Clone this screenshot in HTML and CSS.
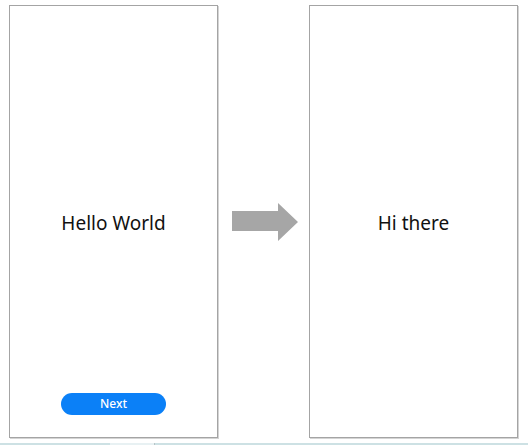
FILE: index.html
```html
<!DOCTYPE html>
<html>
<head>
<meta charset="utf-8">
<link rel="stylesheet" href="styles.css">
</head>
<body>
<div class="stage">
  <div class="frame">
    <div class="title">Hello World</div>
    <div class="foot"><button class="next">Next</button></div>
  </div>
  <svg class="arrow" width="66" height="38" viewBox="0 0 66 38">
    <polygon points="0,8 46,8 46,0 66,19 46,38 46,28 0,28" fill="#a6a6a6"/>
  </svg>
  <div class="frame">
    <div class="title">Hi there</div>
    <div class="foot"></div>
  </div>
</div>
<div class="strip">
  <div class="seg a"></div>
  <div class="seg b"></div>
  <div class="seg c"></div>
  <div class="seg d"></div>
</div>
</body>
</html>
```
FILE: styles.css
```css
html, body {
  margin: 0;
  padding: 0;
  background: #ffffff;
}
body {
  width: 528px;
  height: 445px;
  overflow: hidden;
  font-family: "Noto Sans", "Open Sans", sans-serif;
}
.stage {
  display: flex;
  align-items: center;
  padding: 5px 0 0 9px;
  height: 438px;
  box-sizing: border-box;
}
.frame {
  width: 209px;
  height: 433px;
  box-sizing: border-box;
  border: 1px solid #a4a4a4;
  box-shadow: 1px 1px 0 #d4d4d4;
  display: grid;
  grid-template-rows: 1fr auto 1fr;
  justify-items: center;
}
.frame::before {
  content: "";
}
.title {
  grid-row: 2;
  font-size: 19px;
  line-height: 24px;
  padding-top: 2px;
  color: #111111;
}
.foot {
  grid-row: 3;
  align-self: end;
  padding-bottom: 22px;
}
.next {
  width: 105px;
  height: 22px;
  border: none;
  border-radius: 11px;
  background: #0b80f7;
  color: #ffffff;
  font-family: "Noto Sans", "Open Sans", sans-serif;
  font-size: 12px;
  font-weight: 500;
  padding: 0;
  line-height: 22px;
}
.arrow {
  display: block;
  margin: 0 11px 0 14px;
}
.strip {
  display: flex;
  margin-top: 5px;
  height: 2px;
}
.seg.a { width: 110px; background: #cde1e4; }
.seg.b { width: 44px; background: #e8f1f3; }
.seg.c { width: 1px; background: #b7c4c7; }
.seg.d { flex: 1; background: #cde1e4; }
```
